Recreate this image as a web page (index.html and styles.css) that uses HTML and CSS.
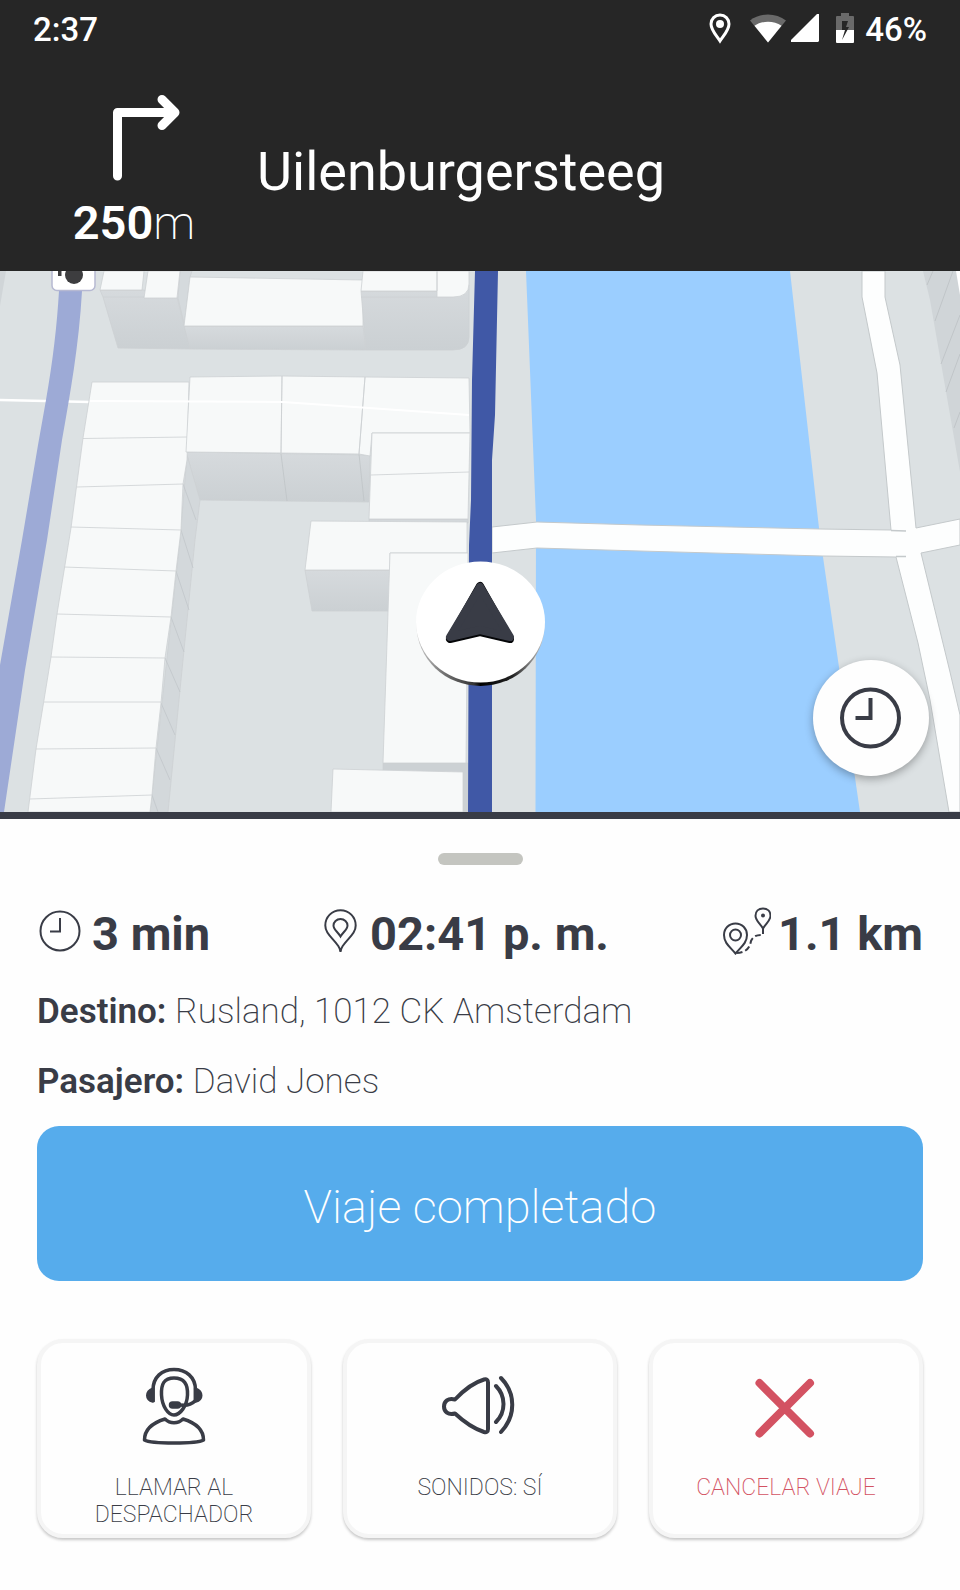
FILE: index.html
```html
<!DOCTYPE html>
<html lang="es">
<head>
<meta charset="utf-8">
<meta name="viewport" content="width=device-width, initial-scale=1">
<title>Viaje en curso</title>
<link rel="stylesheet" href="styles.css">
</head>
<body>
<div class="app">
  <header class="top">
    <div class="status">
      <span>2:37</span>
      <div class="status-icons">
        <svg class="pin" width="22" height="31" viewBox="0 0 22 31"><path d="M11 2C5.900 2 2 5.900 2 11c0 6 5 11 9 17 4-6 9-11 9-17 0-5.100-3.900-9-9-9z" fill="none" stroke="#fff" stroke-width="3"/><circle cx="11" cy="11" r="4" fill="#fff"/></svg>
        <svg class="wifi" width="36" height="29" viewBox="0 0 36 29"><path d="M18 28.500 0 6.500C10-1.500 26-1.500 36 6.500z" fill="#6a6a6a"/><path d="M18 28.500 4.500 11.800C12 6.300 24 6.300 31.500 11.800z" fill="#fff"/></svg>
        <svg class="signal" width="28" height="28" viewBox="0 0 28 28"><path d="M0 28V26L26 0h2v27l-1 1z" fill="#fff"/></svg>
        <svg class="battery" width="18" height="30" viewBox="0 0 18 30"><path d="M0 17V4q0-1 1-1h4V0h8v3h4q1 0 1 1v13z" fill="#6a6a6a"/><path d="M0 17h18v12q0 1-1 1H1q-1 0-1-1z" fill="#fff"/><path d="M12 8H6v9h3L6 27l7-13h-3z" fill="#262626"/></svg>
        <span>46%</span>
      </div>
    </div>
    <div class="maneuver">
      <div class="turn">
        <svg width="68" height="88" viewBox="0 0 68 88" fill="none" stroke="#fff" stroke-width="9" stroke-linecap="round" stroke-linejoin="round"><path d="M5.500 82V18.500H62M50 5.500l13 13-13 13"/></svg>
        <p class="distance"><b>250</b>m</p>
      </div>
      <h1 class="street">Uilenburgersteeg</h1>
    </div>
  </header>

  <main>
    <section class="map">
      <svg class="map-art" viewBox="0 271 960 541" preserveAspectRatio="xMidYMid slice" role="img" aria-label="Mapa de la ruta">
        <defs>
          <linearGradient id="wall" x1="0" y1="0" x2="0" y2="1"><stop offset="0" stop-color="#d6dadd"/><stop offset="1" stop-color="#cbd0d3"/></linearGradient>
          <linearGradient id="rim" x1="0" y1="0" x2="1" y2="0"><stop offset="0" stop-color="#ccc"/><stop offset=".2" stop-color="#777"/><stop offset=".45" stop-color="#333"/><stop offset=".5" stop-color="#000"/><stop offset=".75" stop-color="#222"/><stop offset="1" stop-color="#ccc"/></linearGradient>
        </defs>
        <rect y="271" width="960" height="541" fill="#dce1e3"/>
        <path d="M0 271H6L0 306z" fill="#d0d5d8"/>
        <path d="M0 400 90 402" stroke="#fff" stroke-width="2.500"/>
        <path d="M60 280 59 291C57 325 53 360 46 400L38 445 22 540 0 665V812H4L25 670 47 540 62 440C70 395 79 345 82 291V280z" fill="#9daad6"/>
        <rect x="52" y="255" width="43" height="35.500" rx="5" fill="#fff" stroke="#b6b9d2" stroke-width="1.500"/>
        <circle cx="74" cy="275" r="9" fill="#3d3d3f"/><rect x="58" y="271" width="3.500" height="5" fill="#3d3d3f"/>
        <g stroke="#cdd1d3" stroke-width=".8">
          <path d="M180 271H192L190 277 184 326 190 348 178 298z" fill="#d5dadd"/>
          <path d="M100 290 103 297 118 348 190 349 177 297 143 290z" fill="url(#wall)"/>
          <path d="M103 297H144" fill="none"/>
          <path d="M104 271H144L142 290H100zM148 271H180L177 298H144z" fill="#f7f9f9"/>
          <path d="M184 326H363L366 350 190 349z" fill="url(#wall)"/>
          <path d="M190 277 363 280V326H184z" fill="#f7f9f9"/>
          <path d="M361 291H437L469 285V337Q469 350 453 350H366z" fill="url(#wall)"/>
          <path d="M361 297H437" fill="none"/>
          <path d="M363 271H437V291H361zM437 271H469V284Q469 297 453 297H437z" fill="#f7f9f9"/>
          <path d="M186 452 370 455 369 502 200 500z" fill="url(#wall)"/>
          <path d="M281 454 287 501M359 454 364 501" fill="none" stroke="#bfc4c7"/>
          <path d="M187 455 200 500 195 540 180 690 168 812H150L180 540z" fill="#d3d8db"/>
          <path d="M183 484 196 520M181 530 193 568M176 571 189 610M171 617 184 652M165 658 180 692M161 703 175 735M156 748 170 780M152 795 158 812" fill="none" stroke="#c2c7ca"/>
          <path d="M92 382H189L187 460 183 484 181 530 176 571 171 617 165 658 161 703 156 748 152 795 150 812H28L36 749 51 657 57 614 71 528 83 438z" fill="#f7f9f9"/>
          <path d="M83 438.500 187 437M77 487 183 484M71 527 181 530M64 567 176 571M57 614 171 617M51 657 165 658M44 702H161M36 749 156 748M30 799 152 795" fill="none"/>
          <path d="M190 377 282 376 281 453 186 452zM282 376 365 377 359 454 281 453zM365 377 469 378 470 433H372L370 456 359 454z" fill="#f7f9f9"/>
          <path d="M369 519H468V523H369z" fill="#d3d8db"/>
          <path d="M372 433H470L468 519H369z" fill="#f7f9f9"/>
          <path d="M371 475 469 472" fill="none"/>
          <path d="M305 570H390L389 611H312z" fill="url(#wall)"/>
          <path d="M311 521 467 522V553H390V570H305z" fill="#f7f9f9"/>
          <path d="M383 763H468V812H463L463 772 383 770z" fill="#ccd1d4"/>
          <path d="M390 553H468L466 763H383z" fill="#f7f9f9"/>
          <path d="M333 769 463 772V812H331z" fill="#f7f9f9"/>
        </g>
        <path d="M90 401 283 402 469 415" fill="none" stroke="#fff" stroke-width="2"/>
        <path d="M526 271H790L819 528 823 557 860 812H535.500L536 520z" fill="#9bceff"/>
        <path d="M923 271 930 300 960 472V271z" fill="#d0d5d8"/>
        <path d="M933 271 927 285M953 271 935 321M960 315 941 364M960 354 946 392M960 412 954 428" stroke="#c0c5c8" fill="none"/>
        <path d="M956 271H960V295z" fill="#fff"/>
        <path d="M492 527 537 522 640 525 819 529 891 530 877 373 862 297V271H885V297L900 365 916 528 960 519V545L921 553 950 672 960 715V812H949L930 700 918 643 896 557 823 556 640 551 537 548 492 553z" fill="#fdfefe" stroke="#c4c9cb" stroke-width="1"/>
        <path d="M891 530.500 906 531M896 556.500H906" stroke="#c4c9cb" stroke-width="1.500"/>
        <path d="M475 271 472 380 471 500 469 545 468 812H492V460L495 415 498 271z" fill="#4058a6"/>
        <ellipse cx="480.500" cy="625" rx="64" ry="61" fill="url(#rim)"/>
        <ellipse cx="480.500" cy="622" rx="64.500" ry="60.500" fill="#fff"/>
        <path d="M480 586 450 639 480 632 510 639z" fill="#050608" stroke="#050608" stroke-width="8" stroke-linejoin="round"/>
        <path d="M480 587 450 637 480 630 510 637z" fill="#393c46" stroke="#393c46" stroke-width="8" stroke-linejoin="round"/>
      </svg>
      <button class="map-button" type="button" aria-label="Horario">
        <svg width="64" height="64" viewBox="0 0 64 64" fill="none" stroke="#393c46" stroke-width="4"><circle cx="31.500" cy="32" r="28.500"/><path d="M31.500 12V32H16.500"/></svg>
      </button>
    </section>

    <section class="panel">
      <div class="handle"></div>
      <div class="stats">
        <div class="stat stat-wide"><svg width="42" height="42" viewBox="0 0 42 42" fill="none" stroke="#393c46" stroke-width="2"><circle cx="21" cy="21" r="19.500"/><path d="M21 8V21.500H11"/></svg><span>3 min</span></div>
        <div class="stat stat-time"><svg width="33" height="44" viewBox="0 0 33 44" fill="none" stroke="#393c46" stroke-width="2"><path d="M16.500 1.200C8 1.200 1.300 8 1.300 16.500c0 8 7 12 13 20.500q2 3 2.200 6 .2-3 2.200-6c6-8.500 13-12.500 13-20.500C31.700 8 25 1.200 16.500 1.200z"/><path d="M16.500 10c-4 0-7 3-7 6.500 0 4 4 6 7 11 3-5 7-7 7-11 0-3.500-3-6.500-7-6.500z"/></svg><span>02:41 p. m.</span></div>
        <div class="stat"><svg width="48" height="48" viewBox="0 0 48 48" fill="none" stroke="#393c46" stroke-width="2"><path d="M12.500 16.500C6 16.500 1 21.500 1 28c0 8 6 12 11.500 18.500C18 40 24 36 24 28c0-6.500-5-11.500-11.500-11.500z"/><circle cx="12.500" cy="28" r="5.500"/><path d="M40 1.500c-4.500 0-7.500 3-7.500 7.200 0 5 4.500 7.300 7.500 12.800 3-5.500 7.500-7.800 7.500-12.800 0-4.200-3-7.200-7.500-7.200z"/><circle cx="40" cy="8.500" r="1" fill="#393c46"/><path d="M40 21v7q-9-1-12 6-2 12-15 12" stroke-dasharray="6 3"/></svg><span>1.1 km</span></div>
      </div>
      <dl class="details">
        <div><dt>Destino:</dt> <dd>Rusland, 1012 CK Amsterdam</dd></div>
        <div><dt>Pasajero:</dt> <dd>David Jones</dd></div>
      </dl>
      <button class="primary" type="button">Viaje completado</button>
      <div class="actions">
        <button class="card" type="button">
          <svg width="78" height="80" viewBox="0 0 78 80" fill="none" stroke="#393c46" stroke-width="3.500" stroke-linejoin="round"><path d="M18 36V24C18 11 27 3.500 39 3.500S60.500 11 60.500 24V36"/><path d="M18 23v12c-7-2-7-9 0-12zM60.500 23v12c7-2 7-9 0-12z" fill="#393c46"/><path d="M39 12C29 12 26 18 26.500 29 27 40 33 49 39 49S52 40 52.500 29C53 18 49 12 39 12z"/><path d="M60 35q-5 5-14 4"/><rect x="35.500" y="37" width="9" height="4" rx="2" fill="#393c46"/><path d="M30 53C17 57 9.500 63 9.500 74c7 4 52 4 59 0 0-11-7.500-17-20.500-21-5 5-13 5-18 0z"/></svg>
          <span>LLAMAR AL DESPACHADOR</span>
        </button>
        <button class="card" type="button">
          <svg width="78" height="80" viewBox="0 0 78 80" fill="none" stroke="#393c46" stroke-width="4" stroke-linecap="round" stroke-linejoin="round"><path d="M14 33.500C22 25 31 17 43 13.500q4-1 4 3V63q0 4-4 3C31 62 22 55 14 47.500c-7 2-11-2-11-7s4-9 11-7z"/><path d="M55 20c10 10 10 26 0 36M60 12c15 15 15 38 0 54"/></svg>
          <span>SONIDOS: SÍ</span>
        </button>
        <button class="card cancel" type="button">
          <svg width="78" height="80" viewBox="0 0 78 80" fill="none" stroke="#d35262" stroke-width="8" stroke-linecap="round"><path d="M12.500 17 63 67.500M63 17 12.500 67.500"/></svg>
          <span>CANCELAR VIAJE</span>
        </button>
      </div>
    </section>
  </main>
</div>
</body>
</html>
```
FILE: styles.css
```css
* { box-sizing: border-box; }
body, h1, p, dl, dd { margin: 0; }
body {
  background: #fefefe;
  color: #393c46;
  font-family: Roboto, "Liberation Sans", sans-serif;
}
svg { display: block; flex: none; }
button { font: inherit; cursor: pointer; }

.top {
  background: #262626;
  color: #fff;
  padding: 7px 33px 0;
}
.status {
  display: flex;
  justify-content: space-between;
  align-items: center;
  height: 44px;
  font-size: 33px;
  font-weight: 500;
}
.status-icons { display: flex; align-items: center; }
.status-icons svg { margin-bottom: 2px; }
.pin { margin-right: 19px; }
.wifi { margin-right: 5px; }
.signal { margin-right: 17px; }
.battery { margin-right: 11px; }
.maneuver {
  display: flex;
  padding: 43px 0 20px 32px;
}
.turn { width: 138px; }
.turn svg { margin-left: 47px; }
.distance {
  margin-top: 13px;
  text-align: center;
  font-size: 47px;
  line-height: 56px;
  font-weight: 200;
}
.distance b { font-weight: 600; }
.street {
  margin-left: 54px;
  padding-top: 46px;
  font-size: 54px;
  line-height: 64px;
  font-weight: 400;
}

.map {
  position: relative;
  border-bottom: 7px solid #393c46;
}
.map-art { width: 100%; height: auto; }
.map-button {
  position: absolute;
  right: 31px;
  bottom: 36px;
  display: grid;
  place-items: center;
  width: 116px;
  height: 116px;
  padding: 0;
  border: 0;
  border-radius: 50%;
  background: #fefefe;
  box-shadow: 0 3px 8px rgba(0, 0, 0, .3);
}

.panel { padding: 34px 37px 51px; }
.handle {
  width: 85px;
  height: 12px;
  margin: 0 auto;
  border-radius: 6px;
  background: #c4c5c0;
}
.stats {
  display: flex;
  justify-content: space-between;
  align-items: center;
  margin-top: 41px;
  padding-left: 2px;
  font-size: 47px;
  line-height: 56px;
  font-weight: 700;
}
.stat { display: flex; align-items: center; gap: 7px; }
.stat svg { margin-bottom: 6px; }
.stat-wide { gap: 11px; }
.stat-time { gap: 13px; }
.details {
  display: grid;
  gap: 26px;
  margin-top: 28px;
  font-size: 35px;
  line-height: 44px;
}
.details dt, .details dd { display: inline; }
.details dt { font-weight: 600; }
.details dd { font-weight: 200; }
.primary {
  display: block;
  width: 100%;
  height: 155px;
  margin-top: 22px;
  padding: 6px 0 0;
  border: 0;
  border-radius: 22px;
  background: #56acec;
  color: #fff;
  font-size: 47px;
  font-weight: 200;
}
.actions {
  display: grid;
  grid-template-columns: repeat(3, 1fr);
  gap: 32px;
  margin-top: 58px;
}
.card {
  display: flex;
  flex-direction: column;
  align-items: center;
  gap: 28px;
  height: 199px;
  padding: 23px 30px 0;
  border: 4px solid #f5f5f5;
  border-radius: 26px;
  background: #fefefe;
  box-shadow: 0 2px 3px rgba(0, 0, 0, .22);
  color: #393c46;
  font-size: 23px;
  line-height: 27px;
  font-weight: 200;
}
.cancel { color: #d35262; }
```
